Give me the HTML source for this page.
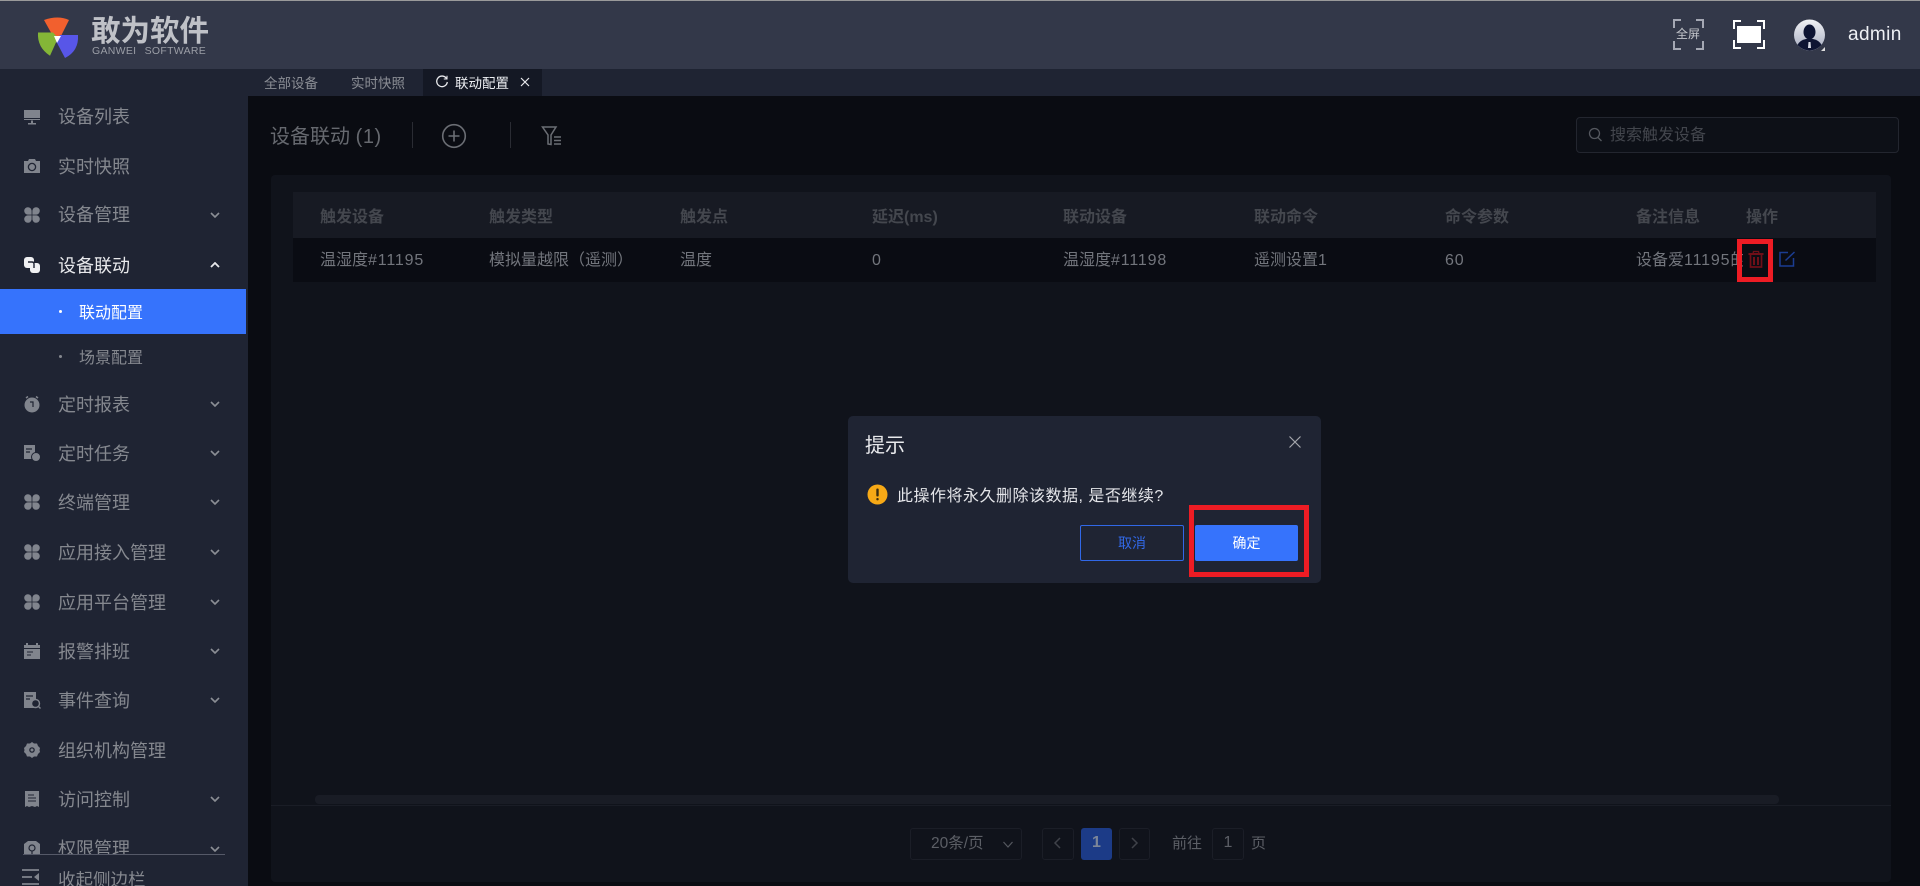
<!DOCTYPE html>
<html lang="zh">
<head>
<meta charset="utf-8">
<title>设备联动</title>
<style>
*{box-sizing:border-box;margin:0;padding:0}
html,body{width:1920px;height:886px;overflow:hidden;background:#0a0c12;font-family:"Liberation Sans","Noto Sans CJK SC",sans-serif}
.a{position:absolute;white-space:nowrap}
#top{left:0;top:0;width:1920px;height:69px;background:#333849;border-top:1px solid #9a9a9a}
#side{left:0;top:69px;width:248px;height:817px;background:#1f2433;overflow:hidden}
.mi{position:absolute;left:58px;font-size:18px;line-height:24px;color:#85888f;white-space:nowrap;transform:translateY(1px)}
.ic{position:absolute;left:23px;width:18px;height:18px}
.ar{position:absolute;left:210px;width:10px;height:6px}
#tabs{left:248px;top:69px;width:1672px;height:27px;background:#1f2433}
.tab{position:absolute;top:1px;height:27px;line-height:28px;font-size:13.5px;color:#8b8e95;white-space:nowrap}
#main{left:248px;top:96px;width:1672px;height:790px;background:#0a0c12}
#panel{left:271px;top:175px;width:1620px;height:707px;background:#10131b;border-radius:4px}
.th{position:absolute;top:206px;font-size:16px;line-height:24px;font-weight:700;color:#44474e;white-space:nowrap}
.td{position:absolute;top:249px;font-size:16px;line-height:24px;color:#72757c;white-space:nowrap}
.n{letter-spacing:.85px}
.pb{position:absolute;top:828px;height:32px;border:1px solid #1b1e27;border-radius:3px;background:#10131b}
.pt{position:absolute;top:832px;font-size:16px;line-height:24px;color:#5c5f66;white-space:nowrap}
</style>
</head>
<body>
<div class="a" id="top"></div>
<svg class="a" style="left:36px;top:14px" width="44" height="44" viewBox="0 0 44 44">
<path d="M8 4 Q22 -1 33 4 L24 22 H18 Z" transform="translate(0,2)" fill="#f2602e"/>
<path d="M2 22 H17 L22 28 L14 47 Q1 38 2 22 Z" transform="translate(0,-2) scale(1,.93)" fill="#84b637"/>
<path d="M24 21 H42 Q43 37 29 44 L20 27 Z" fill="#5856e8"/>
<path d="M18 22 H25 L21 29 Z" fill="#fff"/>
</svg>
<div class="a" style="left:91px;top:15px;font-size:29.5px;line-height:34px;font-weight:700;color:#bfc1c7">敢为软件</div>
<div class="a" style="left:92px;top:45px;font-size:10.5px;line-height:12px;letter-spacing:.3px;color:#9b9ea6;word-spacing:5px">GANWEI SOFTWARE</div>

<svg class="a" style="left:1673px;top:19px" width="31" height="31" viewBox="0 0 31 31" fill="none" stroke="#a5a8b4" stroke-width="2"><path d="M1 9V1H8M23 1H30V9M30 22V30H23M8 30H1V22"/></svg>
<div class="a" style="left:1676px;top:25px;font-size:12px;line-height:18px;color:#c4c6cc">全屏</div>
<svg class="a" style="left:1733px;top:20px" width="32" height="29" viewBox="0 0 32 29" fill="none" stroke="#fff" stroke-width="2"><path d="M1 9V1H8M24 1H31V9M31 20V28H24M8 28H1V20"/><rect x="4" y="6" width="24" height="17" fill="#fff" stroke="none"/></svg>
<svg class="a" style="left:1794px;top:19px" width="32" height="33" viewBox="0 0 32 33">
<defs><linearGradient id="g" x1="0" y1="0" x2="0" y2="1"><stop offset="0" stop-color="#f1f2f5"/><stop offset="1" stop-color="#a6acc0"/></linearGradient></defs>
<circle cx="15.5" cy="16" r="15.5" fill="url(#g)"/>
<ellipse cx="15.5" cy="13" rx="6" ry="7.5" fill="#0e1533"/>
<path d="M3.5 26 Q6 21 12 20 H19 Q25 21 27.5 26 Q22 31.5 15.5 31.5 Q9 31.5 3.5 26 Z" fill="#0e1533"/>
<path d="M14.5 23H16.5L17 29H14Z" fill="#d8dbe5"/>
<path d="M31 28V32H27Z" fill="#ddd"/>
</svg>
<div class="a" style="left:1848px;top:24px;font-size:19px;line-height:22px;letter-spacing:.4px;color:#eef0f4">admin</div>

<div class="a" id="side">
<svg class="ic" style="top:39px" viewBox="0 0 18 18" fill="#80848d"><path d="M1 2H17V12H1Z"/><rect x="1" y="10" width="16" height="1" fill="#1f2433"/><path d="M8 12.5H10V15H13V16.5H5V15H8Z"/></svg>
<div class="mi" style="top:35px">设备列表</div>
<svg class="ic" style="top:88px" viewBox="0 0 18 18"><path d="M1 4H5L6 2H12L13 4H17V16H1Z" fill="#80848d"/><circle cx="9" cy="10" r="3.6" fill="none" stroke="#1f2433" stroke-width="1.3"/></svg>
<div class="mi" style="top:85px">实时快照</div>
<svg class="ic" style="top:137px" viewBox="0 0 18 18" fill="#80848d"><path d="M8.6 8.600H4.600A3.700 3.700 0 1 1 8.600 4.600Z"/><path d="M9.400 8.600H13.400A3.700 3.700 0 1 0 9.400 4.600Z"/><path d="M8.600 9.400H4.600A3.700 3.700 0 1 0 8.600 13.400Z"/><path d="M9.400 9.400H13.400A3.700 3.700 0 1 1 9.400 13.400Z"/></svg>
<div class="mi" style="top:133px">设备管理</div>
<svg class="ar" style="top:143px" viewBox="0 0 10 6" fill="none" stroke="#8b8e95" stroke-width="1.6"><path d="M1 1L5 5L9 1"/></svg>
<svg class="ic" style="top:187px" viewBox="0 0 18 18" fill="#f0f1f3"><rect x="1" y="1" width="10" height="11" rx="3"/><rect x="7" y="7" width="10" height="10" rx="3"/><path d="M5 6H9Q11 6 11 8V12" fill="none" stroke="#1f2433" stroke-width="1.4"/></svg>
<div class="mi" style="top:184px;color:#e8e9ec">设备联动</div>
<svg class="ar" style="top:193px" viewBox="0 0 10 6" fill="none" stroke="#e8e9ec" stroke-width="1.8"><path d="M1 5L5 1L9 5"/></svg>

<div style="position:absolute;left:0;top:220px;width:246px;height:45px;background:#3673fc"></div>
<div style="position:absolute;left:59px;top:241px;width:3px;height:3px;background:#fff;border-radius:50%"></div>
<div class="a" style="left:79px;top:233px;font-size:16px;line-height:24px;color:#fff">联动配置</div>
<div style="position:absolute;left:59px;top:286px;width:3px;height:3px;background:#85888f;border-radius:50%"></div>
<div class="a" style="left:79px;top:278px;font-size:16px;line-height:24px;color:#85888f">场景配置</div>

<svg class="ic" style="top:326px" viewBox="0 0 18 18"><circle cx="9" cy="10" r="7.5" fill="#80848d"/><path d="M3 3L5 1.500M15 3L13 1.500" stroke="#80848d" stroke-width="1.500"/><path d="M7 7H10V12" fill="none" stroke="#1f2433" stroke-width="1.200"/></svg>
<div class="mi" style="top:323px">定时报表</div>
<svg class="ar" style="top:332px" viewBox="0 0 10 6" fill="none" stroke="#8b8e95" stroke-width="1.600"><path d="M1 1L5 5L9 1"/></svg>
<svg class="ic" style="top:375px" viewBox="0 0 18 18"><path d="M1 1H12V15H1Z" fill="#80848d"/><path d="M3 5H9M3 8H7" stroke="#1f2433" stroke-width="1.200"/><circle cx="13" cy="13" r="4.500" fill="#80848d" stroke="#1f2433"/></svg>
<div class="mi" style="top:372px">定时任务</div>
<svg class="ar" style="top:381px" viewBox="0 0 10 6" fill="none" stroke="#8b8e95" stroke-width="1.600"><path d="M1 1L5 5L9 1"/></svg>
<svg class="ic" style="top:424px" viewBox="0 0 18 18" fill="#80848d"><path d="M8.600 8.600H4.600A3.700 3.700 0 1 1 8.600 4.600Z"/><path d="M9.400 8.600H13.400A3.700 3.700 0 1 0 9.400 4.600Z"/><path d="M8.600 9.400H4.600A3.700 3.700 0 1 0 8.600 13.400Z"/><path d="M9.400 9.400H13.400A3.700 3.700 0 1 1 9.400 13.400Z"/></svg>
<div class="mi" style="top:421px">终端管理</div>
<svg class="ar" style="top:430px" viewBox="0 0 10 6" fill="none" stroke="#8b8e95" stroke-width="1.600"><path d="M1 1L5 5L9 1"/></svg>
<svg class="ic" style="top:474px" viewBox="0 0 18 18" fill="#80848d"><path d="M8.600 8.600H4.600A3.700 3.700 0 1 1 8.600 4.600Z"/><path d="M9.400 8.600H13.400A3.700 3.700 0 1 0 9.400 4.600Z"/><path d="M8.600 9.400H4.600A3.700 3.700 0 1 0 8.600 13.400Z"/><path d="M9.400 9.400H13.400A3.700 3.700 0 1 1 9.400 13.400Z"/></svg>
<div class="mi" style="top:471px">应用接入管理</div>
<svg class="ar" style="top:480px" viewBox="0 0 10 6" fill="none" stroke="#8b8e95" stroke-width="1.600"><path d="M1 1L5 5L9 1"/></svg>
<svg class="ic" style="top:524px" viewBox="0 0 18 18" fill="#80848d"><path d="M8.600 8.600H4.600A3.700 3.700 0 1 1 8.600 4.600Z"/><path d="M9.400 8.600H13.400A3.700 3.700 0 1 0 9.400 4.600Z"/><path d="M8.600 9.400H4.600A3.700 3.700 0 1 0 8.600 13.400Z"/><path d="M9.400 9.400H13.400A3.700 3.700 0 1 1 9.400 13.400Z"/></svg>
<div class="mi" style="top:521px">应用平台管理</div>
<svg class="ar" style="top:530px" viewBox="0 0 10 6" fill="none" stroke="#8b8e95" stroke-width="1.600"><path d="M1 1L5 5L9 1"/></svg>
<svg class="ic" style="top:573px" viewBox="0 0 18 18"><path d="M1 3H17V17H1Z" fill="#80848d"/><path d="M4 1V4M14 1V4" stroke="#80848d" stroke-width="2"/><path d="M1 6.500H17M4 10H10M4 13H8" stroke="#1f2433" stroke-width="1.100"/></svg>
<div class="mi" style="top:570px">报警排班</div>
<svg class="ar" style="top:579px" viewBox="0 0 10 6" fill="none" stroke="#8b8e95" stroke-width="1.600"><path d="M1 1L5 5L9 1"/></svg>
<svg class="ic" style="top:622px" viewBox="0 0 18 18"><path d="M1 1H13V17H1Z" fill="#80848d"/><path d="M3 5H10M3 8H7" stroke="#1f2433" stroke-width="1.200"/><circle cx="12.500" cy="12.500" r="4" fill="#1f2433" stroke="#80848d" stroke-width="1.400"/><path d="M15 15L17.500 17.500" stroke="#80848d" stroke-width="1.400"/></svg>
<div class="mi" style="top:619px">事件查询</div>
<svg class="ar" style="top:628px" viewBox="0 0 10 6" fill="none" stroke="#8b8e95" stroke-width="1.600"><path d="M1 1L5 5L9 1"/></svg>
<svg class="ic" style="top:672px" viewBox="0 0 18 18"><path d="M9 1L11 2.500L14 2.500L15 5L17 7L16.500 9L17 11L15 13L14 15.500L11 15.500L9 17L7 15.500L4 15.500L3 13L1 11L1.500 9L1 7L3 5L4 2.500L7 2.500Z" fill="#80848d"/><circle cx="9" cy="9" r="2.800" fill="#1f2433"/><circle cx="9" cy="9" r="1.500" fill="#80848d"/></svg>
<div class="mi" style="top:669px">组织机构管理</div>
<svg class="ic" style="top:721px" viewBox="0 0 18 18"><path d="M2 1H16V17L14 16L12 17L9 16L6 17L4 16L2 17Z" fill="#80848d"/><path d="M5 5H11M5 8H13M5 11H13" stroke="#1f2433" stroke-width="1.100"/></svg>
<div class="mi" style="top:718px">访问控制</div>
<svg class="ar" style="top:727px" viewBox="0 0 10 6" fill="none" stroke="#8b8e95" stroke-width="1.600"><path d="M1 1L5 5L9 1"/></svg>

<div style="position:absolute;left:0;top:755px;width:248px;height:30px;overflow:hidden">
<svg class="ic" style="top:16px" viewBox="0 0 18 18"><path d="M1 4L5 1H13L17 4V17H1Z" fill="#80848d"/><circle cx="9" cy="8" r="3" fill="none" stroke="#1f2433" stroke-width="1.200"/><path d="M9 11V14" stroke="#1f2433" stroke-width="1.200"/></svg>
<div class="mi" style="top:12px">权限管理</div>
<svg class="ar" style="top:22px" viewBox="0 0 10 6" fill="none" stroke="#8b8e95" stroke-width="1.600"><path d="M1 1L5 5L9 1"/></svg>
</div>
<div style="position:absolute;left:23px;top:785px;width:202px;height:1px;background:#555968"></div>
<svg class="ic" style="left:22px;top:800px;width:18px;height:17px" viewBox="0 0 18 17"><path d="M0 1H17M0 8H10M0 15H17" stroke="#80848d" stroke-width="1.700"/><path d="M17 4V12L12 8Z" fill="#80848d"/></svg>
<div class="mi" style="top:798px;font-size:17.500px">收起侧边栏</div>
</div>

<div class="a" id="tabs">
<div class="tab" style="left:16px">全部设备</div>
<div class="tab" style="left:103px">实时快照</div>
<div style="position:absolute;left:175px;top:0;width:119px;height:27px;background:#141824"></div>
<svg style="position:absolute;left:187px;top:6px" width="14" height="14" viewBox="0 0 14 14" fill="none" stroke="#e8e9ec" stroke-width="1.300"><path d="M11.500 3.500A5.300 5.300 0 1 0 12.300 7"/><path d="M12 .8V4H8.800" stroke-width="1.100"/></svg>
<div class="tab" style="left:207px;color:#eceef2">联动配置</div>
<svg style="position:absolute;left:272px;top:8px" width="10" height="10" viewBox="0 0 10 10" stroke="#e8e9ec" stroke-width="1.200"><path d="M1 1L9 9M9 1L1 9"/></svg>
</div>

<div class="a" id="main"></div>
<div class="a" style="left:270px;top:123px;font-size:20px;line-height:28px;color:#66696f">设备联动 <span style="letter-spacing:.6px">(1)</span></div>
<div class="a" style="left:412px;top:122px;width:1px;height:26px;background:#2a2c33"></div>
<div class="a" style="left:510px;top:122px;width:1px;height:26px;background:#2a2c33"></div>
<svg class="a" style="left:441px;top:123px" width="26" height="26" viewBox="0 0 26 26" fill="none" stroke="#6b6e74" stroke-width="1.600"><circle cx="13" cy="13" r="11.300"/><path d="M13 7.500V18.500M7.500 13H18.500"/></svg>
<svg class="a" style="left:541px;top:125px" width="22" height="22" viewBox="0 0 22 22" fill="none" stroke="#6b6e74" stroke-width="1.500"><path d="M1.500 2H15L10 10V19.500L7 19V10Z"/><path d="M13 12H20M13 15.500H20M13 19H20"/></svg>
<div class="a" style="left:1576px;top:117px;width:323px;height:36px;background:#0d1017;border:1px solid #23262f;border-radius:4px"></div>
<svg class="a" style="left:1588px;top:127px" width="15" height="15" viewBox="0 0 15 15" fill="none" stroke="#55585f" stroke-width="1.300"><circle cx="6.500" cy="6.500" r="5"/><path d="M10 10.500L13.500 14"/></svg>
<div class="a" style="left:1610px;top:124px;font-size:16px;line-height:24px;color:#43464d">搜索触发设备</div>

<div class="a" id="panel"></div>
<div class="a" style="left:293px;top:192px;width:1583px;height:46px;background:#171a23"></div>
<div class="a" style="left:293px;top:238px;width:1583px;height:44px;background:#0a0c13"></div>

<div class="th" style="left:320px">触发设备</div>
<div class="th" style="left:489px">触发类型</div>
<div class="th" style="left:680px">触发点</div>
<div class="th" style="left:872px">延迟(ms)</div>
<div class="th" style="left:1063px">联动设备</div>
<div class="th" style="left:1254px">联动命令</div>
<div class="th" style="left:1445px">命令参数</div>
<div class="th" style="left:1636px">备注信息</div>
<div class="th" style="left:1746px">操作</div>

<div class="td" style="left:320px">温湿度<span class="n">#11195</span></div>
<div class="td" style="left:489px">模拟量越限（遥测）</div>
<div class="td" style="left:680px">温度</div>
<div class="td" style="left:872px">0</div>
<div class="td" style="left:1063px">温湿度<span class="n">#11198</span></div>
<div class="td" style="left:1254px">遥测设置1</div>
<div class="td" style="left:1445px"><span class="n">60</span></div>
<div class="td" style="left:1636px;width:107px;overflow:hidden">设备爱<span class="n">11195</span>的</div>

<svg class="a" style="left:1747px;top:250px" width="18" height="18" viewBox="0 0 18 18" fill="none" stroke="#6f0f18" stroke-width="1.700"><path d="M1.500 4H16.500" stroke-width="2"/><path d="M6 3.500L6.500 1.500H11.500L12 3.500" stroke-width="1.300"/><path d="M3.500 5V17H14.500V5"/><path d="M7 7V15M11 7V15" stroke-width="2"/></svg>
<svg class="a" style="left:1779px;top:251px" width="17" height="16" viewBox="0 0 17 16" fill="none" stroke="#1b3d92" stroke-width="1.500"><path d="M9 1.500H1V15H14.500V7"/><path d="M6.500 9.500L15.500 1"/></svg>
<div class="a" style="left:1737px;top:239px;width:36px;height:43px;border:5px solid #ed1c24"></div>

<div class="a" style="left:315px;top:795px;width:1464px;height:9px;background:#191c25;border-radius:4px"></div>
<div class="a" style="left:271px;top:805px;width:1620px;height:1px;background:#1a1d26"></div>

<div class="pb" style="left:910px;width:112px"></div>
<div class="pt" style="left:931px;font-size:15.500px">20条/页</div>
<svg class="a" style="left:1003px;top:841px" width="10" height="7" viewBox="0 0 10 7" fill="none" stroke="#55585f" stroke-width="1.200"><path d="M.5 1L5 6L9.500 1"/></svg>
<div class="pb" style="left:1042px;width:32px"></div>
<svg class="a" style="left:1053px;top:837px" width="9" height="12" viewBox="0 0 9 12" fill="none" stroke="#3f4249" stroke-width="1.500"><path d="M7 1L2 6L7 11"/></svg>
<div class="a" style="left:1081px;top:828px;width:31px;height:32px;background:#1c3b87;border-radius:3px;text-align:center;font-size:16px;line-height:30px;font-weight:700;color:#7c8699">1</div>
<div class="pb" style="left:1119px;width:31px"></div>
<svg class="a" style="left:1130px;top:837px" width="9" height="12" viewBox="0 0 9 12" fill="none" stroke="#3f4249" stroke-width="1.500"><path d="M2 1L7 6L2 11"/></svg>
<div class="pt" style="left:1172px;font-size:15px">前往</div>
<div class="pb" style="left:1212px;width:32px;text-align:center;font-size:16px;line-height:28px;color:#5c5f66">1</div>
<div class="pt" style="left:1251px;font-size:15px">页</div>

<div class="a" style="left:848px;top:416px;width:473px;height:167px;background:#1f2433;border-radius:5px"></div>
<div class="a" style="left:865px;top:432px;font-size:20px;line-height:28px;color:#e9eaed">提示</div>
<svg class="a" style="left:1289px;top:436px" width="12" height="12" viewBox="0 0 12 12" stroke="#a5a7ad" stroke-width="1.200"><path d="M.5 .5L11.500 11.500M11.500 .5L.5 11.500"/></svg>
<svg class="a" style="left:867px;top:484px" width="21" height="21" viewBox="0 0 21 21"><circle cx="10.500" cy="10.500" r="10" fill="#f7a916"/><rect x="9.300" y="4.500" width="2.400" height="8" rx="1" fill="#3a2c10"/><rect x="9.300" y="14" width="2.400" height="2.400" rx="1" fill="#3a2c10"/></svg>
<div class="a" style="left:897px;top:485px;font-size:16px;line-height:24px;letter-spacing:.5px;color:#e4e5e9">此操作将永久删除该数据, 是否继续?</div>
<div class="a" style="left:1080px;top:525px;width:104px;height:36px;border:1px solid #3168e6;border-radius:2px;text-align:center;font-size:14px;line-height:34px;color:#3168e6">取消</div>
<div class="a" style="left:1195px;top:525px;width:103px;height:36px;background:#3673fc;border-radius:2px;text-align:center;font-size:14px;line-height:36px;color:#fff">确定</div>
<div class="a" style="left:1189px;top:505px;width:120px;height:72px;border:5px solid #ed1c24"></div>
</body>
</html>
